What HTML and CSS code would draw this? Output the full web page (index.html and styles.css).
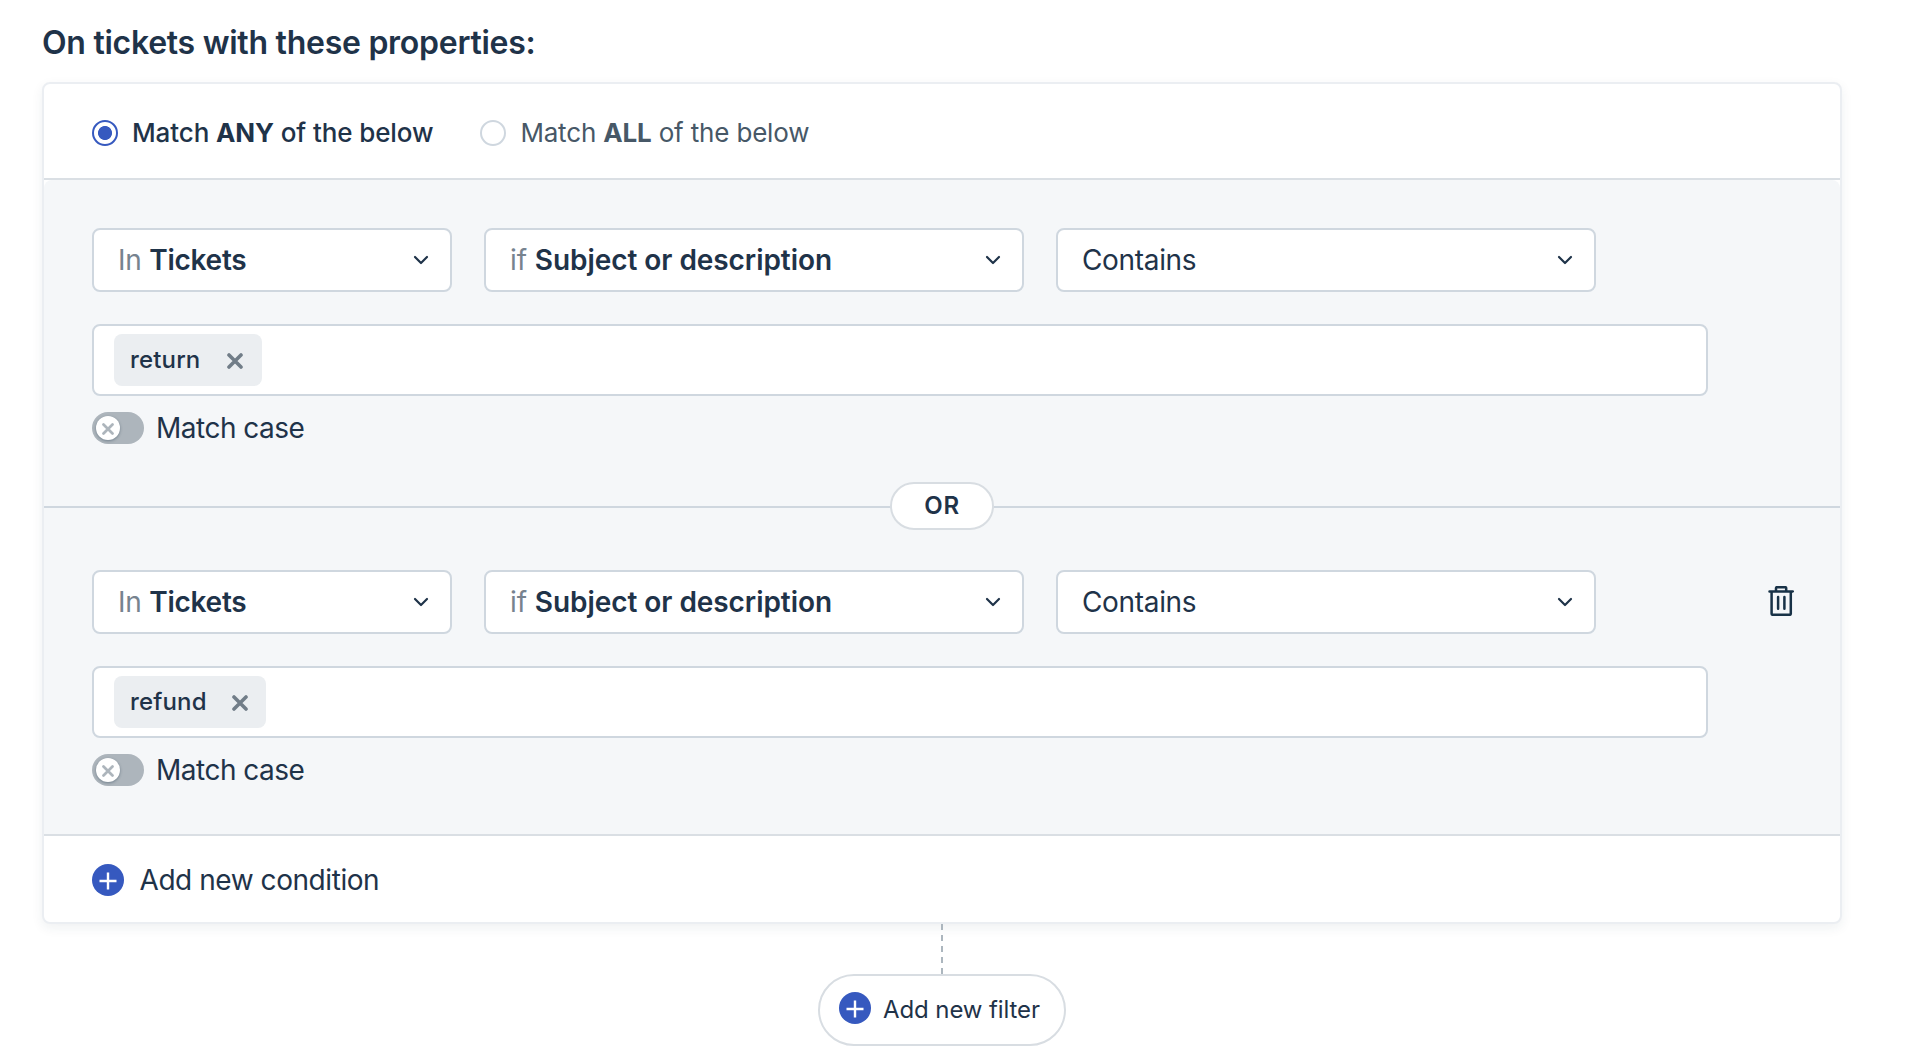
FILE: index.html
```html
<!DOCTYPE html>
<html lang="en">
<head>
<meta charset="utf-8">
<title>Ticket properties</title>
<link rel="stylesheet" href="styles.css">
</head>
<body>
<svg class="sprite" aria-hidden="true">
  <symbol id="chevron" viewBox="0 0 16 10"><path d="M2 2l6 6 6-6" fill="none" stroke="currentColor" stroke-width="2.2" stroke-linecap="round" stroke-linejoin="round"/></symbol>
  <symbol id="cross" viewBox="0 0 16 16"><path d="M2 2l12 12M14 2L2 14" fill="none" stroke="currentColor" stroke-width="3.6" stroke-linecap="round"/></symbol>
  <symbol id="plus" viewBox="0 0 32 32"><circle cx="16" cy="16" r="16" fill="#3659bf"/><path d="M16 8.5v17M7.5 17h17" fill="none" stroke="#fff" stroke-width="2.4"/></symbol>
  <symbol id="trash" viewBox="0 0 26 30"><path d="M1.5 5.4h23.3M8 5V2q0-.8.8-.8h8.6q.8 0 .8.8v3M3.6 6v21.8q0 1 1 1h17.2q1 0 1-1V6M10.1 11v11.8M16.4 11v11.8" fill="none" stroke="currentColor" stroke-width="2.5" stroke-linecap="round" stroke-linejoin="round"/></symbol>
</svg>
<main class="page">
  <h1 class="title">On tickets with these properties:</h1>
  <section class="card">
    <div class="match">
      <label class="option option-on"><span class="radio radio-on"></span><span class="option-text any">Match <b>ANY</b> of the below</span></label>
      <label class="option"><span class="radio"></span><span class="option-text all">Match <b>ALL</b> of the below</span></label>
    </div>
    <div class="conditions">
      <div class="condition">
        <div class="selects">
          <div class="select select-narrow"><span class="label tickets"><i>In</i> <b>Tickets</b></span><svg class="chevron"><use href="#chevron"/></svg></div>
          <div class="select"><span class="label subject"><i>if</i> <b>Subject or description</b></span><svg class="chevron"><use href="#chevron"/></svg></div>
          <div class="select"><span class="label contains">Contains</span><svg class="chevron"><use href="#chevron"/></svg></div>
        </div>
        <div class="tags"><span class="chip"><span class="chip-text">return</span><svg class="cross"><use href="#cross"/></svg></span></div>
        <div class="case"><span class="toggle"><span class="knob"><svg class="knob-cross"><use href="#cross"/></svg></span></span><span class="case-text">Match case</span></div>
      </div>
      <div class="divider"><span class="or">OR</span></div>
      <div class="condition condition-next">
        <div class="selects">
          <div class="select select-narrow"><span class="label tickets"><i>In</i> <b>Tickets</b></span><svg class="chevron"><use href="#chevron"/></svg></div>
          <div class="select"><span class="label subject"><i>if</i> <b>Subject or description</b></span><svg class="chevron"><use href="#chevron"/></svg></div>
          <div class="select"><span class="label contains">Contains</span><svg class="chevron"><use href="#chevron"/></svg></div>
          <svg class="trash"><use href="#trash"/></svg>
        </div>
        <div class="tags"><span class="chip chip-wide"><span class="chip-text">refund</span><svg class="cross"><use href="#cross"/></svg></span></div>
        <div class="case"><span class="toggle"><span class="knob"><svg class="knob-cross"><use href="#cross"/></svg></span></span><span class="case-text">Match case</span></div>
      </div>
    </div>
    <div class="add-condition"><svg class="plus"><use href="#plus"/></svg><span class="add-text">Add new condition</span></div>
  </section>
  <div class="footer">
    <svg class="connector" viewBox="0 0 2 50"><path d="M1 0V50" stroke="#acb6be" stroke-width="2" stroke-dasharray="6 5"/></svg>
    <div class="add-filter"><svg class="plus"><use href="#plus"/></svg><span class="filter-text">Add new filter</span></div>
  </div>
</main>
</body>
</html>
```
FILE: styles.css
```css
* { box-sizing: border-box; }
body { margin: 0; background: #fff; color: #1f3349; font-family: Inter, "Liberation Sans", sans-serif; }
.sprite { display: none; }
svg { display: block; flex: none; }
b { font-weight: 600; }
i { font-style: normal; }
.page { height: 1064px; padding: 22px 64px 0 42px; overflow: hidden; }
.title { margin: 0; height: 60px; font-size: 32px; line-height: 42px; font-weight: 600; letter-spacing: -0.27px; white-space: nowrap; }
.card { width: 1800px; height: 842px; border: 2px solid #ebeef2; border-radius: 8px; background: #fff; box-shadow: 0 4px 12px rgba(24, 50, 71, .07); }
.match { display: flex; gap: 47px; height: 96px; padding: 4px 48px 0; align-items: center; border-bottom: 2px solid #dadfe4; }
.option { display: flex; align-items: center; gap: 14px; height: 32px; font-size: 26px; line-height: 32px; color: #475867; white-space: nowrap; }
.option-on { color: #1f3349; font-weight: 500; }
.option b { font-weight: 700; }
.any { letter-spacing: -0.11px; }
.all { letter-spacing: -0.17px; }
.radio { width: 26px; height: 26px; border: 2px solid #cfd7df; border-radius: 50%; background: #fff; }
.radio-on { border-color: #3659bf; background: radial-gradient(circle, #3659bf 6.6px, #fff 7.4px); }
.conditions { height: 656px; background: #f5f7f9; border-radius: 8px 8px 0 0; border-bottom: 2px solid #dadfe4; }
.condition { height: 326px; padding: 48px 48px 0; }
.condition-next { padding-top: 62px; }
.selects { display: flex; align-items: center; gap: 32px; height: 64px; }
.select { display: flex; flex: none; align-items: center; justify-content: space-between; width: 540px; height: 64px; padding: 0 21px 0 24px; border: 2px solid #cfd7df; border-radius: 8px; background: #fff; }
.select-narrow { width: 360px; }
.label { font-size: 28px; line-height: 36px; white-space: nowrap; }
.label i { color: #77838f; }
.tickets { letter-spacing: -0.25px; }
.subject { letter-spacing: -0.06px; }
.contains { letter-spacing: -0.33px; }
.chevron { width: 16px; height: 10px; }
.trash { width: 26px; height: 30px; margin: 0 0 2px 140px; color: #183247; }
.tags { display: flex; align-items: center; width: 1616px; height: 72px; margin-top: 32px; padding: 0 20px; border: 2px solid #cfd7df; border-radius: 8px; background: #fff; }
.chip { display: flex; align-items: center; justify-content: space-between; width: 148px; height: 52px; padding: 0 19px 0 16px; border-radius: 8px; background: #ebeef1; }
.chip-wide { width: 152px; padding-right: 18px; }
.chip-text { font-size: 24px; line-height: 32px; font-weight: 550; letter-spacing: .15px; }
.cross { width: 16px; height: 16px; margin-top: 2px; color: #717d88; }
.case { display: flex; align-items: center; gap: 12px; height: 32px; margin-top: 16px; }
.toggle { display: flex; align-items: center; width: 52px; height: 32px; padding: 0 4px; border-radius: 16px; background: #adb5bc; }
.knob { display: grid; place-items: center; width: 24px; height: 24px; border-radius: 50%; background: #fff; box-shadow: 0 1px 3px rgba(24, 50, 71, .4); }
.knob-cross { width: 12px; height: 12px; margin-top: 2px; color: #adb5bc; }
.case-text, .add-text { font-size: 28px; line-height: 36px; letter-spacing: -0.5px; white-space: nowrap; }
.add-text { letter-spacing: -0.44px; }
.divider { display: flex; justify-content: center; align-items: center; height: 2px; background: #cfd7df; }
.or { position: relative; top: -1px; display: grid; place-items: center; flex: none; width: 104px; height: 48px; border: 2px solid #d8dde2; border-radius: 24px; background: #fff; font-size: 24px; line-height: 30px; font-weight: 600; letter-spacing: .6px; }
.add-condition { display: flex; align-items: center; gap: 15.5px; height: 86px; padding: 2px 48px 0; }
.plus { width: 32px; height: 32px; }
.footer { display: flex; flex-direction: column; align-items: center; width: 1800px; }
.connector { width: 2px; height: 50px; }
.add-filter { display: flex; align-items: center; gap: 12px; width: 248px; height: 72px; padding: 0 19px; border: 2px solid #d8dde2; border-radius: 36px; background: #fff; white-space: nowrap; }
.add-filter .plus { margin-bottom: 4px; }
.filter-text { font-size: 24px; line-height: 32px; letter-spacing: -0.1px; }
```
